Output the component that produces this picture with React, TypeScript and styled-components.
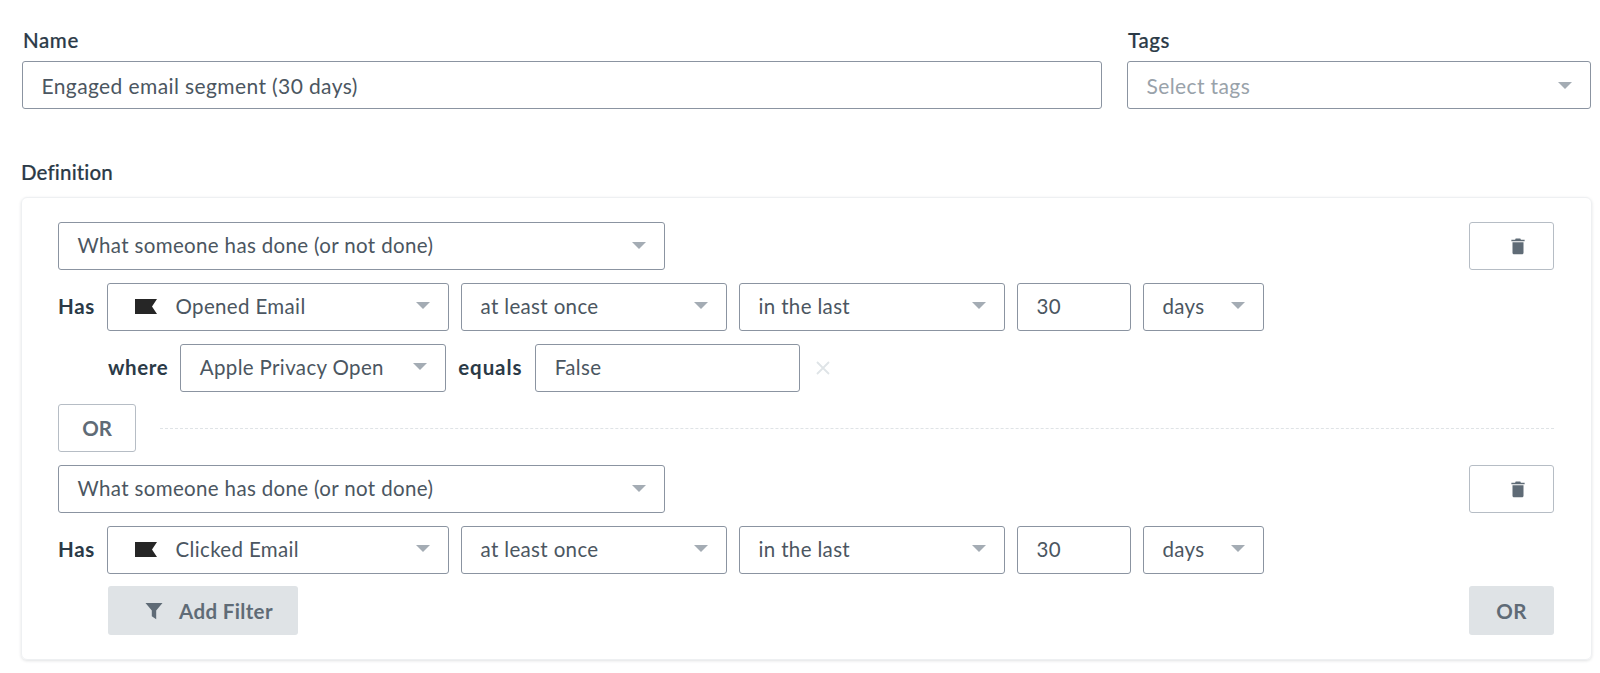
import React from "react";
import styled, { createGlobalStyle } from "styled-components";

const Global = createGlobalStyle`
  html, body { margin: 0; padding: 0; background: #fff; }
  body { font-family: "Lato", "Open Sans", "Liberation Sans", sans-serif; }
`;

const Page = styled.div`
  width: 1600px;
  height: 673px;
  box-sizing: border-box;
  padding: 28px 8px 0 21px;
  overflow: hidden;
`;

const Label = styled.label`
  display: block;
  font-size: 20.5px;
  font-weight: 500;
  line-height: 24px;
  margin-bottom: 9px;
  letter-spacing: 0.15px;
  color: #2b3a47;
  -webkit-text-stroke: 0.2px #2b3a47;
`;

const TopRow = styled.div`
  display: flex;
  gap: 25px;
  padding-left: 1px;

  ${Label} {
    padding-left: 1px;
    letter-spacing: 0.6px;
  }
`;

const Field = styled.div<{ $width: number }>`
  width: ${(p) => p.$width}px;
  display: flex;
  flex-direction: column;
`;

const DefinitionLabel = styled(Label)`
  margin-top: 51px;
  margin-bottom: 13px;
`;

const Box = styled.div<{ $width?: number }>`
  box-sizing: border-box;
  height: 48px;
  flex: none;
  width: ${(p) => (p.$width ? `${p.$width}px` : "100%")};
  display: flex;
  align-items: center;
  padding: 0 19px 0 18.5px;
  border: 1.5px solid #8b94a1;
  border-radius: 3px;
  background: #fff;
  color: #4b5661;
  font-size: 21px;
  letter-spacing: 0.39px;
  white-space: nowrap;
`;

const Card = styled.section`
  width: 100%;
  box-sizing: border-box;
  height: 463px;
  padding: 24px 37px 0 36px;
  border: 1px solid #eef0f2;
  border-radius: 6px;
  box-shadow: 0 1px 3px rgba(40, 50, 60, 0.14);
  display: flex;
  flex-direction: column;
  gap: 12.75px;

  ${Box} {
    padding-bottom: 2px;
    font-size: 20.5px;
    letter-spacing: 0.35px;
  }
`;

const Row = styled.div<{ $between?: boolean; $indent?: number }>`
  display: flex;
  align-items: center;
  gap: 12px;
  height: 48px;
  flex: none;
  padding-left: ${(p) => p.$indent ?? 0}px;
  justify-content: ${(p) => (p.$between ? "space-between" : "flex-start")};
`;

const Placeholder = styled.span`
  color: #99a2aa;
`;

const BoxText = styled.span`
  flex: 1;
`;

const Caret = styled.span`
  flex: none;
  width: 0;
  height: 0;
  border-left: 7px solid transparent;
  border-right: 7px solid transparent;
  border-top: 7px solid #a4acb4;
  margin-right: -1px;
`;

const FlagIcon = styled.svg`
  flex: none;
  width: 22px;
  height: 15px;
  margin: 2px 19px 0 8px;
`;

const RowLabel = styled.span<{ $width?: number }>`
  flex: none;
  width: ${(p) => (p.$width ? `${p.$width}px` : "auto")};
  font-size: 20.5px;
  font-weight: 700;
  letter-spacing: 0.6px;
  color: #2b3a47;
  margin-bottom: 2px;
`;

const HasLabel = styled(RowLabel)`
  margin-right: -12px;
`;

const EqualsLabel = styled(RowLabel)`
  letter-spacing: 0.9px;
  margin-right: 1px;
`;

const CloseIcon = styled.svg`
  flex: none;
  width: 16px;
  height: 16px;
  margin-left: 3px;
`;

const OutlineButton = styled.button<{ $width: number }>`
  flex: none;
  box-sizing: border-box;
  width: ${(p) => p.$width}px;
  height: 48px;
  display: flex;
  align-items: center;
  justify-content: center;
  padding: 0;
  background: #fff;
  border: 1.5px solid #b6bdc5;
  border-radius: 3px;
  color: #5f6b76;
  font: 700 20.5px "Lato", sans-serif;
`;

const TrashGlyph = styled.svg`
  margin-left: 13px;
`;

const Dashed = styled.div`
  flex: 1;
  border-top: 1.5px dashed #dfe3e6;
  margin-left: 12px;
`;

const FilledButton = styled.button<{ $width: number }>`
  flex: none;
  box-sizing: border-box;
  width: ${(p) => p.$width}px;
  height: 49px;
  display: flex;
  align-items: center;
  justify-content: center;
  gap: 16px;
  padding: 0;
  background: #dfe3e6;
  border: none;
  border-radius: 3px;
  color: #5f6b76;
  font: 700 20.5px "Lato", sans-serif;
  letter-spacing: 0.35px;
`;

const FilterGlyph = styled.svg`
  margin-left: 12px;
`;

const LastRow = styled(Row)`
  justify-content: space-between;
  padding-left: 50px;
`;

const Flag = () => (
  <FlagIcon viewBox="0 0 22 15">
    <path d="M0 0H22L17 7.5L22 15H0Z" fill="#262626" />
  </FlagIcon>
);

const TrashIcon = () => (
  <TrashGlyph width="14" height="18" viewBox="0 0 15 18">
    <path d="M5 1h5l.6 1.2H14.6v1.6H.4V2.2h4z" fill="#5f6b76" />
    <path d="M1.6 5h11.8v11.2c0 1-.7 1.6-1.6 1.6H3.2c-.9 0-1.6-.6-1.6-1.6z" fill="#5f6b76" />
  </TrashGlyph>
);

const FilterIcon = () => (
  <FilterGlyph width="18" height="18" viewBox="0 0 18 18">
    <path d="M0.5 1H17.5L11.2 8.4V17.2L6.8 14.2V8.4Z" fill="#5f6b76" />
  </FilterGlyph>
);

const Select = ({ width, children, flag }: { width?: number; children: React.ReactNode; flag?: boolean }) => (
  <Box $width={width}>
    {flag && <Flag />}
    <BoxText>{children}</BoxText>
    <Caret />
  </Box>
);

const EventRow = ({ event }: { event: string }) => (
  <Row>
    <HasLabel $width={49}>Has</HasLabel>
    <Select width={342} flag>{event}</Select>
    <Select width={266}>at least once</Select>
    <Select width={266}>in the last</Select>
    <Box $width={114}>30</Box>
    <Select width={121}>days</Select>
  </Row>
);

const TypeRow = () => (
  <Row $between>
    <Select width={607}>What someone has done (or not done)</Select>
    <OutlineButton $width={85} aria-label="Delete">
      <TrashIcon />
    </OutlineButton>
  </Row>
);

export default function App() {
  return (
    <Page>
      <Global />
      <TopRow>
        <Field $width={1080}>
          <Label>Name</Label>
          <Box>Engaged email segment (30 days)</Box>
        </Field>
        <Field $width={464}>
          <Label>Tags</Label>
          <Box>
            <BoxText>
              <Placeholder>Select tags</Placeholder>
            </BoxText>
            <Caret />
          </Box>
        </Field>
      </TopRow>
      <DefinitionLabel>Definition</DefinitionLabel>
      <Card>
        <TypeRow />
        <EventRow event="Opened Email" />
        <Row $indent={50}>
          <RowLabel>where</RowLabel>
          <Select width={266}>Apple Privacy Open</Select>
          <EqualsLabel>equals</EqualsLabel>
          <Box $width={265}>False</Box>
          <CloseIcon viewBox="0 0 16 16">
            <path d="M2 2L14 14M14 2L2 14" stroke="#dfe4e7" strokeWidth="1.8" fill="none" />
          </CloseIcon>
        </Row>
        <Row>
          <OutlineButton $width={78}>OR</OutlineButton>
          <Dashed />
        </Row>
        <TypeRow />
        <EventRow event="Clicked Email" />
        <LastRow>
          <FilledButton $width={190}>
            <FilterIcon />
            Add Filter
          </FilledButton>
          <FilledButton $width={85}>OR</FilledButton>
        </LastRow>
      </Card>
    </Page>
  );
}
